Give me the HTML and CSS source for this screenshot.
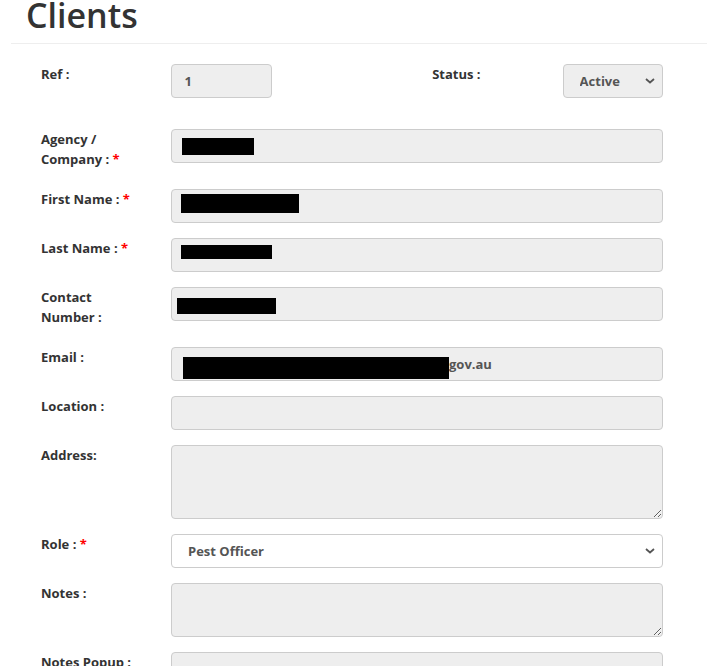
FILE: index.html
```html
<!DOCTYPE html>
<html lang="en">
<head>
    <meta charset="UTF-8">
    <meta name="viewport" content="width=device-width, initial-scale=1.0">
    <title>Clients</title>
    <link rel="stylesheet" href="styles.css">
</head>
<body>
    <div class="page-header">
        <h1>Clients</h1>
    </div>
    <hr class="divider">

    <form class="client-form">
        <div class="ref-row">
            <label for="ref">Ref :</label>
            <input type="text" id="ref" class="form-control" value="1" readonly>
            <div></div>
            <label for="status">Status :</label>
            <select id="status" class="form-control select-control" disabled>
                <option>Active</option>
                <option>Inactive</option>
            </select>
        </div>

        <div class="form-row">
            <label for="agency">Agency / Company : <span class="req">*</span></label>
            <div class="field">
                <input type="text" id="agency" class="form-control" readonly>
                <span class="redact redact-agency"></span>
            </div>
        </div>

        <div class="form-row">
            <label for="first-name">First Name : <span class="req">*</span></label>
            <div class="field">
                <input type="text" id="first-name" class="form-control" readonly>
                <span class="redact redact-first"></span>
            </div>
        </div>

        <div class="form-row">
            <label for="last-name">Last Name : <span class="req">*</span></label>
            <div class="field">
                <input type="text" id="last-name" class="form-control" readonly>
                <span class="redact redact-last"></span>
            </div>
        </div>

        <div class="form-row">
            <label for="contact">Contact Number :</label>
            <div class="field">
                <input type="text" id="contact" class="form-control" readonly>
                <span class="redact redact-contact"></span>
            </div>
        </div>

        <div class="form-row">
            <label for="email">Email :</label>
            <div class="field">
                <input type="text" id="email" class="form-control email-control" value="gov.au" readonly>
                <span class="redact redact-email"></span>
            </div>
        </div>

        <div class="form-row">
            <label for="location">Location :</label>
            <input type="text" id="location" class="form-control" readonly>
        </div>

        <div class="form-row">
            <label for="address">Address:</label>
            <textarea id="address" class="form-control area-lg" readonly></textarea>
        </div>

        <div class="form-row">
            <label for="role">Role : <span class="req">*</span></label>
            <select id="role" class="form-control select-control select-white">
                <option>Pest Officer</option>
                <option>Manager</option>
            </select>
        </div>

        <div class="form-row">
            <label for="notes">Notes :</label>
            <textarea id="notes" class="form-control area-md" readonly></textarea>
        </div>

        <div class="form-row">
            <label for="notes-popup">Notes Popup :</label>
            <input type="text" id="notes-popup" class="form-control" readonly>
        </div>
    </form>
</body>
</html>
```

FILE: styles.css
```css
body {
    margin: 0;
    font-family: 'Open Sans', 'Liberation Sans', sans-serif;
    color: #333;
    background-color: #fff;
}

.page-header {
    padding: 0 26px;
}

.page-header h1 {
    margin: -5px 0 0;
    font-size: 34px;
    line-height: 40px;
    font-weight: 600;
    color: #333;
}

.divider {
    margin: 8px 0 20px 11px;
    border: none;
    border-top: 1px solid #eee;
}

.client-form {
    margin-left: 41px;
    width: 622px;
}

.ref-row {
    display: grid;
    grid-template-columns: repeat(5, 1fr);
    column-gap: 30px;
    margin-bottom: 31px;
}

.form-row {
    display: grid;
    grid-template-columns: 100px 1fr;
    column-gap: 30px;
    margin-bottom: 15px;
}

label {
    display: block;
    font-size: 13px;
    font-weight: bold;
    line-height: 20px;
    margin-bottom: 5px;
}

.req {
    color: red;
}

.field {
    position: relative;
}

.form-control {
    display: block;
    box-sizing: border-box;
    width: 100%;
    height: 34px;
    padding: 6px 12px;
    font-family: inherit;
    font-size: 13px;
    font-weight: bold;
    color: #555;
    background-color: #eee;
    border: 1px solid #ccc;
    border-radius: 4px;
    outline: none;
}

.select-control {
    appearance: none;
    -webkit-appearance: none;
    padding-left: 16px;
    opacity: 1;
    background-image: url("data:image/svg+xml,%3Csvg xmlns='http://www.w3.org/2000/svg' width='10' height='6' viewBox='0 0 10 6'%3E%3Cpath d='M1 1l4 3.5L9 1' fill='none' stroke='%23555' stroke-width='1.8'/%3E%3C/svg%3E");
    background-repeat: no-repeat;
    background-position: right 7px center;
}

.select-white {
    background-color: #fff;
}

.email-control {
    text-indent: 265px;
}

textarea.form-control {
    resize: vertical;
}

.area-lg {
    height: 74px;
}

.area-md {
    height: 54px;
}

.redact {
    position: absolute;
    background-color: #000;
}

.redact-agency {
    left: 11px;
    top: 9px;
    width: 72px;
    height: 17px;
}

.redact-first {
    left: 10px;
    top: 5px;
    width: 118px;
    height: 19px;
}

.redact-last {
    left: 10px;
    top: 7px;
    width: 91px;
    height: 14px;
}

.redact-contact {
    left: 6px;
    top: 11px;
    width: 99px;
    height: 16px;
}

.redact-email {
    left: 12px;
    top: 10px;
    width: 266px;
    height: 22px;
}
```
